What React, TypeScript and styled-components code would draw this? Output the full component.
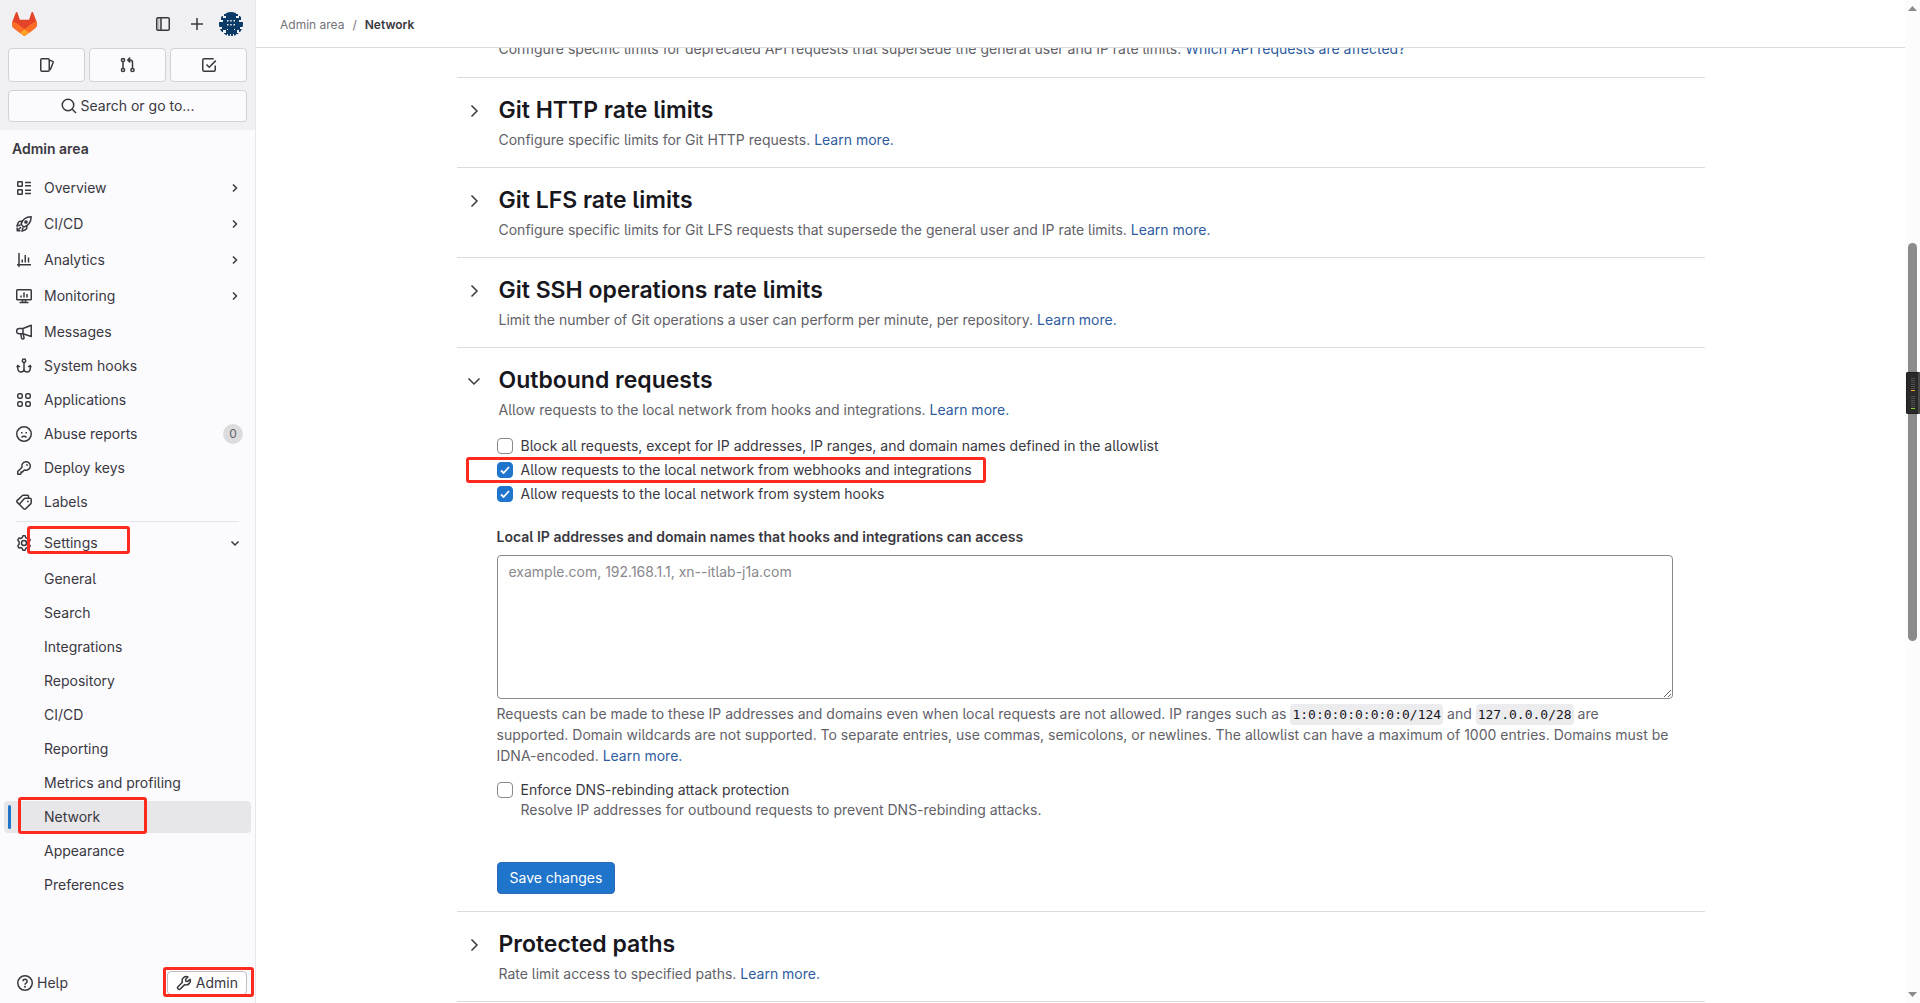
import React from "react";
import styled, { createGlobalStyle, css } from "styled-components";

const Global = createGlobalStyle`
  *, *::before, *::after { box-sizing: border-box; }
  html, body, #root { height: 100%; }
  body {
    margin: 0;
    overflow: hidden;
    font-family: Inter, "Noto Sans", sans-serif;
    font-feature-settings: "cv05";
    font-size: 14px;
    line-height: 20px;
    color: #3a383f;
    background: #fff;
  }
  button, input, textarea { font: inherit; font-feature-settings: inherit; color: inherit; margin: 0; }
  h2, p, ul, nav { margin: 0; padding: 0; }
  ul { list-style: none; }
`;

/* ---------- icons ---------- */

const Svg = styled.svg<{ $size?: number }>`
  display: block;
  flex: none;
  width: ${(p) => p.$size ?? 16}px;
  height: ${(p) => p.$size ?? 16}px;
  fill: none;
  stroke: currentColor;
  stroke-width: 1.5;
`;

const shapes: Record<string, React.ReactNode> = {
  sidebar: (
    <>
      <rect x="1.75" y="1.75" width="12.5" height="12.5" rx="1.25" />
      <path d="M6 2v12" />
      <path d="M3.8 2v12" strokeWidth="1" opacity=".4" />
    </>
  ),
  plus: <path d="M8 2v12M2 8h12" />,
  issues: (
    <>
      <rect x="1.75" y="1.75" width="8.5" height="12.5" rx="1.25" />
      <path d="M10.5 3.2l2.8.9c.7.2 1 .9.8 1.5l-2.4 6.2c-.2.6-.6.9-1.2 1" />
    </>
  ),
  merge: (
    <>
      <circle cx="3" cy="3" r="1.6" />
      <circle cx="3" cy="13" r="1.6" />
      <circle cx="12.5" cy="13" r="1.6" />
      <path d="M3 4.6v6.8M12.5 11.4V5.5A2.5 2.5 0 0 0 10 3H8M10.2.6 7.8 3l2.4 2.4" />
    </>
  ),
  todo: (
    <>
      <path d="M14.25 8.5v4.25c0 .83-.67 1.5-1.5 1.5h-9.5c-.83 0-1.5-.67-1.5-1.5v-9.5c0-.83.67-1.5 1.5-1.5h9.5" />
      <path d="M5.5 7.5 8.2 10.2 14.8 3.6" />
    </>
  ),
  search: (
    <>
      <circle cx="7" cy="7" r="5.75" />
      <path d="m11.2 11.2 3.8 3.8" />
    </>
  ),
  overview: (
    <>
      <rect x="1.75" y="1.75" width="4.5" height="4.5" rx=".5" />
      <rect x="1.75" y="9.75" width="4.5" height="4.5" rx=".5" />
      <path d="M9 2.5h6M9 5.75h6M9 10.25h6M9 13.5h6" />
    </>
  ),
  rocket: (
    <>
      <path d="M5 8.2C6.2 4 9.8 1 15.2.8 15 6.2 12 9.8 7.8 11z" strokeLinejoin="round" />
      <circle cx="10" cy="6" r="1.1" fill="currentColor" />
      <path d="M6.2 5.2H4.4c-.9 0-1.7.5-2.1 1.3L.9 10l3.6-1M10.8 9.8v1.8c0 .9-.5 1.7-1.3 2.1L6 15.1l1-3.6M3.8 11 5 12.2M2.2 13.8l2.6-2.6M1.2 11.5v3.3h3.3" strokeLinejoin="round" />
    </>
  ),
  chart: <path d="M3 1v14M1 12.75h14M6.25 10.5V7.5M9.25 10.5V3M12.5 10.5V5.5" />,
  monitor: (
    <>
      <rect x=".75" y="1.75" width="14.5" height="10" rx=".75" />
      <path d="M5 9.5V7.5M8 9.5V4.5M11 9.5V6M6.5 12v2.5M9.5 12v2.5M3.5 14.5h9" />
    </>
  ),
  bullhorn: (
    <path
      d="M7 4.5 15.25 1.2v11.3L7 9.75H3.2a2.4 2.4 0 0 1 0-5.25zM7 4.5v5.2M4.8 9.9l.7 4.2c.1.5.5.8 1 .8h.6c.6 0 1-.6.9-1.2l-.8-3.6"
      strokeLinejoin="round"
    />
  ),
  hook: (
    <>
      <circle cx="8" cy="2.7" r="1.7" />
      <path d="M8 4.5v9M1.75 7.5v2.8c0 2 1.4 3.7 3.3 3.7C6.7 14 8 12.7 8 11c0 1.7 1.3 3 3 3 1.9 0 3.25-1.7 3.25-3.7V7.5M.8 9.4l1-1.9 2 1.4M15.2 9.4l-1-1.9-2 1.4" />
    </>
  ),
  apps: (
    <>
      <rect x="1.75" y="1.75" width="4.5" height="4.5" rx="1.5" />
      <rect x="9.75" y="1.75" width="4.5" height="4.5" rx="1.5" />
      <rect x="1.75" y="9.75" width="4.5" height="4.5" rx="1.5" />
      <rect x="9.75" y="9.75" width="4.5" height="4.5" rx="1.5" />
    </>
  ),
  sad: (
    <>
      <circle cx="8" cy="8" r="7.25" />
      <path d="M5.6 11.4a3.2 3.2 0 0 1 4.8 0" />
      <path d="M5 6.75h1.5M9.5 6.75H11" strokeWidth="1.7" />
    </>
  ),
  key: (
    <>
      <path d="M6 7.2A4.25 4.25 0 1 1 8.8 10L7.5 10.7 6.5 12H5v1.7l-.6.55H1.75v-2.75z" strokeLinejoin="round" />
      <circle cx="11" cy="5" r=".9" fill="currentColor" stroke="none" />
    </>
  ),
  labels: (
    <>
      <path d="M9.2 4.25h4.6c.8 0 1.45.6 1.45 1.45v2.9c0 .4-.1.7-.4 1L9.7 14.8c-.6.6-1.5.6-2 0L4.2 11.300c-.6-.6-.6-1.500 0-2l4-4.600c.3-.3.6-.45 1-.45z" />
      <path d="M3.600 10.600 1.300 8.400c-.6-.6-.6-1.400 0-2l4.900-4.700c.3-.3.7-.45 1-.45h4.300c.6 0 1 .4 1 .9v2" />
      <circle cx="12" cy="7.400" r=".9" fill="currentColor" stroke="none" />
    </>
  ),
  gear: (
    <>
      <path
        d="M6.7 1.2a.6.6 0 0 1 .5-.45h1.6a.6.6 0 0 1 .5.45l.5 1.5 1.2.7 1.6-.3c.3-.1.500 0 .6.200l.9 1.500c.1.200.1.500-.1.700L12.900 6.700v2.600l1.100 1.200c.2.200.2.500.1.700l-.9 1.500c-.1.200-.3.300-.6.200l-1.600-.3-1.200.7-.5 1.500a.6.6 0 0 1-.5.45H7.200a.6.6 0 0 1-.5-.45l-.5-1.500L5 12.600l-1.600.3c-.3.1-.5 0-.6-.2l-.9-1.500c-.1-.2-.1-.5.1-.7l1.100-1.200V6.700L2 5.500c-.2-.2-.2-.5-.1-.7l.9-1.500c.1-.2.3-.3.600-.2L5 3.400l1.200-.7z"
        strokeLinejoin="round"
      />
      <circle cx="8" cy="8" r="2.5" />
    </>
  ),
  help: (
    <>
      <circle cx="8" cy="8" r="7.25" />
      <path d="M5.9 6.3a2.1 2.1 0 1 1 3.2 1.8c-.7.4-1.1.8-1.1 1.6" />
      <circle cx="8" cy="11.7" r="1" fill="currentColor" stroke="none" />
    </>
  ),
  wrench: (
    <path
      d="M14.1 4.2 11.7 6.4 9.8 6.2 9.6 4.3l2.3-2.4A4.2 4.2 0 0 0 6.4 7.3L2 11.7a1.5 1.5 0 0 0 0 2.1l.2.2a1.5 1.5 0 0 0 2.1 0l4.4-4.4a4.2 4.2 0 0 0 5.4-5.4z"
      strokeLinejoin="round"
    />
  ),
  right: <path d="m5.500 2.500 5.500 5.500-5.500 5.500" />,
  smallRight: <path d="m6 4.5 3.500 3.500L6 11.500" />,
  down: <path d="m2.500 5.500 5.500 5.500 5.500-5.500" />,
  smallDown: <path d="M4.500 6.500 8 10l3.500-3.500" />,
};

const Icon = ({ name, size }: { name: string; size?: number }) => (
  <Svg viewBox="0 0 16 16" $size={size} aria-hidden="true">
    {shapes[name]}
  </Svg>
);

const LogoSvg = styled.svg`
  display: block;
  width: 25px;
  height: 24px;
`;

const Logo = () => (
  <LogoSvg viewBox="0 0 25 24" aria-hidden="true">
    <path fill="#E24329" d="m24.507 9.5-.034-.09L21.082.562a.896.896 0 0 0-1.694.091l-2.29 7.01H7.825L5.535.653a.898.898 0 0 0-1.694-.09L.451 9.411.416 9.5a6.297 6.297 0 0 0 2.09 7.278l.012.01.03.022 5.16 3.867 2.56 1.935 1.554 1.176a1.051 1.051 0 0 0 1.268 0l1.555-1.176 2.56-1.935 5.197-3.89.014-.01A6.297 6.297 0 0 0 24.507 9.5Z" />
    <path fill="#FC6D26" d="m24.507 9.5-.034-.09a11.44 11.44 0 0 0-4.56 2.051l-7.447 5.632 4.742 3.584 5.197-3.89.014-.01A6.297 6.297 0 0 0 24.507 9.5Z" />
    <path fill="#FCA326" d="m7.707 20.677 2.56 1.935 1.555 1.176a1.051 1.051 0 0 0 1.268 0l1.555-1.176 2.56-1.935-4.743-3.584-4.755 3.584Z" />
    <path fill="#FC6D26" d="M5.01 11.461a11.43 11.43 0 0 0-4.56-2.05L.416 9.5a6.297 6.297 0 0 0 2.09 7.278l.012.01.03.022 5.16 3.867 4.745-3.584-7.444-5.632Z" />
  </LogoSvg>
);

const AvatarSvg = styled.svg`
  display: block;
  width: 24px;
  height: 24px;
  border-radius: 50%;
`;

const Avatar = () => (
  <AvatarSvg viewBox="0 0 24 24" aria-hidden="true">
    <rect width="24" height="24" fill="#f0f0f3" />
    <path
      fill="#0b3a66"
      d="M7 0h10v2h2v2h-2v2h3V4h2v4h-2v2h4v5h-3v2h2v3h-3v-2h-2v3h2v3h-2v-2h-1v2h-2v-2h-1v2h-2v-2h-1v2H9v-2H8v2H6v-2H5v-1h2v-3H4v2H1v-3h2v-2H0v-5h4V8H2V4h2v2h3V4H5V2h2z"
    />
    <path
      fill="#f0f0f3"
      d="M8 8h1.500v1.500H8zM11.200 8h1.500v1.500h-1.500zM14.500 8H16v1.500h-1.500zM8 12h1.500v1.500H8zM14.500 12H16v1.500h-1.500zM11.200 12h1.500v1.500h-1.500zM8 17h1v1H8zM15 17h1v1h-1z"
    />
  </AvatarSvg>
);

/* ---------- shell ---------- */

const Shell = styled.div`
  display: flex;
  height: 100vh;
  overflow: hidden;
`;

const Sidebar = styled.aside`
  display: flex;
  flex-direction: column;
  flex: none;
  width: 256px;
  background: #fbfbfe;
  border-right: 1px solid #e7e6ea;
`;

const SidebarTop = styled.div`
  display: flex;
  flex-direction: column;
  gap: 8px;
  padding: 8px;
  background: #f0f0f3;
`;

const BrandRow = styled.div`
  display: flex;
  align-items: center;
  height: 32px;
  padding: 0 4px;
`;

const BrandLink = styled.a`
  margin-right: auto;
`;

const IconButton = styled.button`
  display: grid;
  place-items: center;
  width: 34px;
  height: 32px;
  padding: 0;
  border: 0;
  background: transparent;
`;

const AvatarButton = styled(IconButton)`
  width: 24px;
  margin-left: 5px;
`;

const Shortcuts = styled.div`
  display: flex;
  gap: 4px;
`;

const boxed = css`
  display: flex;
  align-items: center;
  justify-content: center;
  border: 1px solid #d2d1d6;
  border-radius: 4px;
  background: #fbfbfe;
`;

const Shortcut = styled.button`
  ${boxed}
  flex: 1;
  height: 34px;
  padding: 0;
`;

const SearchButton = styled.button`
  ${boxed}
  gap: 4px;
  height: 32px;
  padding: 0;
`;

const NavArea = styled.nav`
  flex: 1;
  min-height: 0;
  padding: 8px 4px 0;
`;

const NavHeading = styled.div`
  padding: 1px 8px 13px;
  font-weight: 600;
`;

const NavList = styled.ul`
  display: flex;
  flex-direction: column;
  gap: 2px;
`;

const NavCell = styled.li<{ $group?: boolean }>`
  position: relative;
  padding-bottom: ${(p) => (p.$group ? 2 : 0)}px;
`;

const NavLink = styled.a<{ $active?: boolean }>`
  display: flex;
  align-items: center;
  gap: 12px;
  height: 32px;
  padding: 0 8px 0 12px;
  border-radius: 4px;
  color: inherit;
  text-decoration: none;
  background: ${(p) => (p.$active ? "#e7e6e8" : "transparent")};
`;

const NavLabel = styled.span<{ $indent?: boolean }>`
  flex: 1;
  padding-left: ${(p) => (p.$indent ? 28 : 0)}px;
`;

const ActiveBar = styled.span`
  position: absolute;
  left: 4px;
  top: 4px;
  width: 3px;
  height: 24px;
  border-radius: 2px;
  background: #1f75cb;
`;

const Count = styled.span`
  width: 20px;
  border-radius: 10px;
  background: #dcdcde;
  color: #626168;
  font-size: 12px;
  text-align: center;
`;

const Divider = styled.li`
  height: 1px;
  margin: 1px 12px 3px;
  background: #e4e3e7;
`;

const SidebarFoot = styled.div`
  display: flex;
  align-items: center;
  justify-content: space-between;
  padding: 8px;
`;

const FootButton = styled.button<{ $outlined?: boolean }>`
  display: flex;
  align-items: center;
  gap: 4px;
  height: 24px;
  padding: 0 8px;
  border: 1px solid ${(p) => (p.$outlined ? "#bfbfc3" : "transparent")};
  border-radius: 4px;
  background: ${(p) => (p.$outlined ? "#fff" : "transparent")};
`;

const FootCell = styled.div`
  position: relative;
  display: flex;
`;

/* Red frame drawn over a control to point it out. */
const Mark = styled.span<{ $inset: string; $width?: number }>`
  position: absolute;
  inset: ${(p) => p.$inset};
  ${(p) => (p.$width ? `width: ${p.$width}px;` : "")}
  border: 3px solid #ff2a1f;
  border-radius: 3px;
  pointer-events: none;
`;

/* ---------- main ---------- */

const Main = styled.main`
  flex: 1;
  min-width: 0;
  overflow: hidden;
`;

const TopBar = styled.header`
  position: relative;
  z-index: 1;
  display: flex;
  align-items: center;
  gap: 8px;
  height: 48px;
  padding: 2px 24px 0;
  border-bottom: 1px solid #dcdcde;
  background: #fff;
  font-size: 12px;
  color: #737278;
`;

const Crumb = styled.a<{ $current?: boolean }>`
  color: ${(p) => (p.$current ? "#3a383f" : "#737278")};
  font-weight: ${(p) => (p.$current ? 600 : 400)};
  text-decoration: none;
`;

const Container = styled.div`
  max-width: 1280px;
  margin: 0 auto;
  padding: 0 16px;
`;

const Section = styled.section`
  border-bottom: 1px solid #dcdcde;
`;

const SectionHead = styled.div<{ $open?: boolean }>`
  display: flex;
  align-items: flex-start;
  gap: 15px;
  padding: 17px 16px ${(p) => (p.$open ? 16 : 17)}px 7px;
`;

const ClippedHead = styled.div`
  margin-top: -9px;
  padding: 0 16px 18px 42px;
`;

const Toggle = styled.button`
  display: grid;
  place-items: center;
  width: 20px;
  height: 32px;
  padding: 0;
  border: 0;
  background: transparent;
`;

const Title = styled.h2`
  margin-bottom: 5px;
  font-size: 23px;
  line-height: 30px;
  font-weight: 600;
  color: #18171d;
`;

const Muted = styled.p`
  color: #626168;
`;

const Link = styled.a`
  color: #2f5ca0;
  text-decoration: none;
`;

const Form = styled.form`
  display: flex;
  flex-direction: column;
  align-items: flex-start;
  padding: 0 32px 17px 40px;
`;

const CheckList = styled.div`
  display: flex;
  flex-direction: column;
  align-items: flex-start;
  gap: 4px;
`;

const CheckRow = styled.div`
  position: relative;
  display: flex;
  align-items: center;
  gap: 8px;
`;

const CheckBox = styled.input`
  appearance: none;
  flex: none;
  width: 16px;
  height: 16px;
  border: 1px solid #89888d;
  border-radius: 4px;
  background: #fff center / 14px 14px no-repeat;
  &:checked {
    border-color: #1f75cb;
    background-color: #1f75cb;
    background-image: url("data:image/svg+xml,%3Csvg xmlns='http://www.w3.org/2000/svg' viewBox='0 0 14 14'%3E%3Cpath d='M3 7.5 5.6 10 11 4' fill='none' stroke='white' stroke-width='1.8'/%3E%3C/svg%3E");
  }
`;

const FieldLabel = styled.label`
  margin: 23px 0 8px;
  font-weight: 600;
`;

const TextArea = styled.textarea`
  display: block;
  width: 100%;
  height: 144px;
  padding: 6px 11px;
  border: 1px solid #89888d;
  border-radius: 4px;
  background: #fff;
  resize: both;
  &::placeholder { color: #89888d; opacity: 1; }
`;

const Help = styled(Muted)`
  margin: 4px 0 14px;
  line-height: 21px;
`;

const Code = styled.code`
  padding: 3px 2px;
  border-radius: 4px;
  background: #ececef;
  color: #18171d;
  font-family: "DejaVu Sans Mono", monospace;
  font-size: 13px;
  line-height: 1;
`;

const Hint = styled(Muted)`
  padding-left: 24px;
`;

const Save = styled.button`
  height: 32px;
  margin-top: 42px;
  padding: 0 12px;
  border: 1px solid #2f68b4;
  border-radius: 4px;
  background: #1f75cb;
  color: #fff;
`;

/* ---------- scrollbar ---------- */

const Rail = styled.div`
  position: relative;
  display: flex;
  flex-direction: column;
  align-items: center;
  flex: none;
  width: 15px;
  padding: 6px 0;
  background: #fcfcfc;
`;

const Arrow = styled.span<{ $down?: boolean }>`
  width: 9px;
  height: 5px;
  background: #8b8b8b;
  clip-path: ${(p) => (p.$down ? "polygon(0 0, 100% 0, 50% 100%)" : "polygon(50% 0, 100% 100%, 0 100%)")};
`;

const Track = styled.div`
  display: flex;
  flex-direction: column;
  flex: 1;
`;

const Before = styled.div`
  flex: 232;
`;

const Thumb = styled.div`
  flex: 398;
  width: 9px;
  border-radius: 5px;
  background: #8b8b8b;
`;

const After = styled.div`
  flex: 351;
`;

const Meter = styled.div`
  position: absolute;
  top: 372px;
  right: 0;
  display: flex;
  flex-direction: column;
  align-items: center;
  gap: 5px;
  width: 14px;
  height: 42px;
  padding-top: 5px;
  border: 1px solid #1c1c1c;
  border-right: 2px solid #4a4a4a;
  border-radius: 2px 0 0 2px;
  background: #292929;
`;

const MeterBars = styled.div`
  display: flex;
  flex-direction: column;
  gap: 1px;
`;

const MeterBar = styled.span<{ $color?: string }>`
  width: 4px;
  height: 1px;
  background: ${(p) => p.$color ?? "#505050"};
`;

/* ---------- data ---------- */

type Item = { label: string; icon: string; group?: boolean; count?: number };

const items: Item[] = [
  { label: "Overview", icon: "overview", group: true },
  { label: "CI/CD", icon: "rocket", group: true },
  { label: "Analytics", icon: "chart", group: true },
  { label: "Monitoring", icon: "monitor", group: true },
  { label: "Messages", icon: "bullhorn" },
  { label: "System hooks", icon: "hook" },
  { label: "Applications", icon: "apps" },
  { label: "Abuse reports", icon: "sad", count: 0 },
  { label: "Deploy keys", icon: "key" },
  { label: "Labels", icon: "labels" },
];

const settings = [
  "General",
  "Search",
  "Integrations",
  "Repository",
  "CI/CD",
  "Reporting",
  "Metrics and profiling",
  "Network",
  "Appearance",
  "Preferences",
];

const Panel = ({
  title,
  text,
  open,
  children,
}: {
  title: string;
  text: string;
  open?: boolean;
  children?: React.ReactNode;
}) => (
  <Section>
    <SectionHead $open={open}>
      <Toggle type="button" aria-label={title} aria-expanded={!!open}>
        <Icon name={open ? "down" : "right"} />
      </Toggle>
      <div>
        <Title>{title}</Title>
        <Muted>
          {text} <Link href="#">Learn more.</Link>
        </Muted>
      </div>
    </SectionHead>
    {children}
  </Section>
);

const Check = ({
  id,
  label,
  checked,
  children,
}: {
  id: string;
  label: string;
  checked?: boolean;
  children?: React.ReactNode;
}) => (
  <CheckRow>
    <CheckBox type="checkbox" id={id} defaultChecked={checked} />
    <label htmlFor={id}>{label}</label>
    {children}
  </CheckRow>
);

const Bars = ({ color }: { color: string }) => (
  <MeterBars>
    {[0, 1, 2, 3, 4, 5].map((n) => (
      <MeterBar key={n} />
    ))}
    <MeterBar $color={color} />
  </MeterBars>
);

export default function App() {
  return (
    <Shell>
      <Global />
      <Sidebar>
        <SidebarTop>
          <BrandRow>
            <BrandLink href="#" aria-label="Homepage">
              <Logo />
            </BrandLink>
            <IconButton type="button" aria-label="Primary navigation sidebar">
              <Icon name="sidebar" />
            </IconButton>
            <IconButton type="button" aria-label="Create new">
              <Icon name="plus" />
            </IconButton>
            <AvatarButton type="button" aria-label="User menu">
              <Avatar />
            </AvatarButton>
          </BrandRow>
          <Shortcuts>
            <Shortcut type="button" aria-label="Issues">
              <Icon name="issues" />
            </Shortcut>
            <Shortcut type="button" aria-label="Merge requests">
              <Icon name="merge" />
            </Shortcut>
            <Shortcut type="button" aria-label="To-do list">
              <Icon name="todo" />
            </Shortcut>
          </Shortcuts>
          <SearchButton type="button">
            <Icon name="search" />
            Search or go to...
          </SearchButton>
        </SidebarTop>

        <NavArea>
          <NavHeading>Admin area</NavHeading>
          <NavList>
            {items.map((item) => (
              <NavCell key={item.label} $group={item.group}>
                <NavLink href="#">
                  <Icon name={item.icon} />
                  <NavLabel>{item.label}</NavLabel>
                  {item.group && <Icon name="smallRight" />}
                  {item.count !== undefined && <Count>{item.count}</Count>}
                </NavLink>
              </NavCell>
            ))}
            <Divider />
            <NavCell $group>
              <NavLink href="#">
                <Icon name="gear" />
                <NavLabel>Settings</NavLabel>
                <Icon name="smallDown" />
              </NavLink>
              <Mark $inset="-1px auto 7px 23px" $width={103} />
            </NavCell>
            {settings.map((label) => {
              const active = label === "Network";
              return (
                <NavCell key={label}>
                  <NavLink href="#" $active={active}>
                    <NavLabel $indent>{label}</NavLabel>
                  </NavLink>
                  {active && <ActiveBar />}
                  {active && <Mark $inset="-4px auto -1px 14px" $width={129} />}
                </NavCell>
              );
            })}
          </NavList>
        </NavArea>

        <SidebarFoot>
          <FootButton type="button">
            <Icon name="help" />
            Help
          </FootButton>
          <FootCell>
            <FootButton type="button" $outlined>
              <Icon name="wrench" />
              Admin
            </FootButton>
            <Mark $inset="-4px -7px -2px -4px" />
          </FootCell>
        </SidebarFoot>
      </Sidebar>

      <Main>
        <TopBar>
          <Crumb href="#">Admin area</Crumb>
          <span>/</span>
          <Crumb href="#" $current>
            Network
          </Crumb>
        </TopBar>
        <Container>
          <Section>
            <ClippedHead>
              <Muted>
                Configure specific limits for deprecated API requests that supersede the general user and IP rate
                limits. <Link href="#">Which API requests are affected?</Link>
              </Muted>
            </ClippedHead>
          </Section>
          <Panel title="Git HTTP rate limits" text="Configure specific limits for Git HTTP requests." />
          <Panel
            title="Git LFS rate limits"
            text="Configure specific limits for Git LFS requests that supersede the general user and IP rate limits."
          />
          <Panel
            title="Git SSH operations rate limits"
            text="Limit the number of Git operations a user can perform per minute, per repository."
          />
          <Panel
            open
            title="Outbound requests"
            text="Allow requests to the local network from hooks and integrations."
          >
            <Form onSubmit={(e) => e.preventDefault()}>
              <CheckList>
                <Check
                  id="block-all"
                  label="Block all requests, except for IP addresses, IP ranges, and domain names defined in the allowlist"
                />
                <Check id="webhooks" label="Allow requests to the local network from webhooks and integrations" checked>
                  <Mark $inset="-3px -14px -3px -31px" />
                </Check>
                <Check id="system-hooks" label="Allow requests to the local network from system hooks" checked />
              </CheckList>
              <FieldLabel htmlFor="allowlist">
                Local IP addresses and domain names that hooks and integrations can access
              </FieldLabel>
              <TextArea id="allowlist" placeholder="example.com, 192.168.1.1, xn--itlab-j1a.com" />
              <Help>
                Requests can be made to these IP addresses and domains even when local requests are not allowed. IP
                ranges such as <Code>1:0:0:0:0:0:0:0/124</Code> and <Code>127.0.0.0/28</Code> are supported. Domain
                wildcards are not supported. To separate entries, use commas, semicolons, or newlines. The allowlist
                can have a maximum of 1000 entries. Domains must be IDNA-encoded. <Link href="#">Learn more.</Link>
              </Help>
              <Check id="dns" label="Enforce DNS-rebinding attack protection" />
              <Hint>Resolve IP addresses for outbound requests to prevent DNS-rebinding attacks.</Hint>
              <Save type="submit">Save changes</Save>
            </Form>
          </Panel>
          <Panel title="Protected paths" text="Rate limit access to specified paths." />
        </Container>
      </Main>

      <Rail aria-hidden="true">
        <Arrow />
        <Track>
          <Before />
          <Thumb />
          <After />
        </Track>
        <Arrow $down />
        <Meter>
          <Bars color="#f5a623" />
          <Bars color="#7ed321" />
        </Meter>
      </Rail>
    </Shell>
  );
}
